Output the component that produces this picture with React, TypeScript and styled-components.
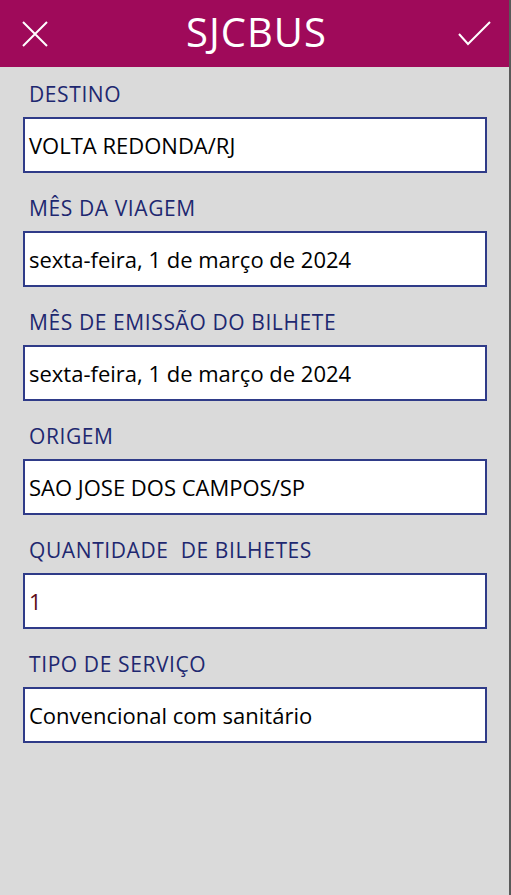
import React from "react";
import styled, { createGlobalStyle } from "styled-components";

const GlobalStyle = createGlobalStyle`
  html, body {
    margin: 0;
    padding: 0;
    background: #dadada;
  }
  * { box-sizing: border-box; }
`;

const Screen = styled.div`
  width: 511px;
  height: 895px;
  background: #dadada;
  border-right: 2px solid #595959;
  font-family: "Open Sans", "Noto Sans", sans-serif;
  display: flex;
  flex-direction: column;
  overflow: hidden;
`;

const Header = styled.header`
  height: 67px;
  flex: none;
  background: #9f0a5a;
  display: grid;
  grid-template-columns: 1fr auto 1fr;
  align-items: center;
  padding: 0 18px 0 22px;
`;

const IconButton = styled.button<{ $end?: boolean }>`
  background: none;
  border: 0;
  padding: 0;
  margin: 0;
  display: flex;
  justify-self: ${(p) => (p.$end ? "end" : "start")};
  cursor: pointer;
`;

const Title = styled.h1`
  margin: 0;
  color: #ffffff;
  font-family: "Open Sans", sans-serif;
  font-weight: 400;
  font-size: 40px;
  letter-spacing: 1px;
  line-height: 54px;
  padding-bottom: 4px;
`;

const Form = styled.main`
  display: flex;
  flex-direction: column;
  padding: 14px 0 0 23px;
  gap: 22px;
`;

const Field = styled.div`
  display: flex;
  flex-direction: column;
  gap: 9px;
`;

const Label = styled.label`
  color: #1e2870;
  font-size: 21px;
  letter-spacing: 0.6px;
  line-height: 27px;
  padding-left: 6px;
  white-space: pre;
`;

const Input = styled.div<{ $accent?: boolean }>`
  width: 464px;
  height: 56px;
  background: #ffffff;
  border: 2px solid #2f3b88;
  display: flex;
  align-items: center;
  padding: 0 4px;
  font-size: 22px;
  line-height: 28px;
  color: ${(p) => (p.$accent ? "#5c0a16" : "#000000")};
`;

const fields: { label: string; value: string; accent?: boolean }[] = [
  { label: "DESTINO", value: "VOLTA REDONDA/RJ" },
  { label: "MÊS DA VIAGEM", value: "sexta-feira, 1 de março de 2024" },
  { label: "MÊS DE EMISSÃO DO BILHETE", value: "sexta-feira, 1 de março de 2024" },
  { label: "ORIGEM", value: "SAO JOSE DOS CAMPOS/SP" },
  { label: "QUANTIDADE  DE BILHETES", value: "1", accent: true },
  { label: "TIPO DE SERVIÇO", value: "Convencional com sanitário" },
];

export default function App() {
  return (
    <>
      <GlobalStyle />
      <Screen>
        <Header>
          <IconButton aria-label="Fechar">
            <svg width="26" height="26" viewBox="0 0 26 26">
              <path d="M1 1 L25 25 M25 1 L1 25" stroke="#fff" strokeWidth="2" fill="none" />
            </svg>
          </IconButton>
          <Title>SJCBUS</Title>
          <IconButton $end aria-label="Confirmar">
            <svg width="33" height="25" viewBox="0 0 33 25">
              <path d="M1 13 L10 23 L32 1" stroke="#fff" strokeWidth="2" fill="none" />
            </svg>
          </IconButton>
        </Header>
        <Form>
          {fields.map((f) => (
            <Field key={f.label}>
              <Label>{f.label}</Label>
              <Input $accent={f.accent}>{f.value}</Input>
            </Field>
          ))}
        </Form>
      </Screen>
    </>
  );
}
